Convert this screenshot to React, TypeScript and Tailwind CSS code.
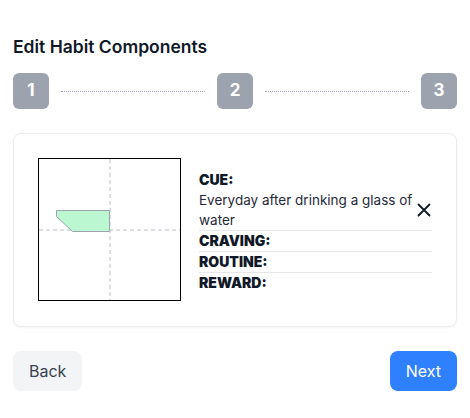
import React from "react";

function StepBox({ n }: { n: number }) {
  return (
    <div className="flex h-9 w-9 shrink-0 items-center justify-center rounded-md bg-[#9ca3af] text-[17px] font-bold text-white">
      {n}
    </div>
  );
}

function Canvas() {
  return (
    <div className="h-[143px] w-[143px] shrink-0 border border-black bg-white">
      <svg width="141" height="141" viewBox="0 0 141 141" className="block">
        <line x1="71" y1="0" x2="71" y2="141" stroke="#d1d5db" strokeWidth="1.5" strokeDasharray="4 3" />
        <line x1="0" y1="71" x2="141" y2="71" stroke="#d1d5db" strokeWidth="1.5" strokeDasharray="4 3" />
        <polygon
          points="17.5,51.5 70.5,51.5 70.5,72.5 33.5,72.5 17.5,57.5"
          fill="#bbf7d0"
          stroke="#9ca3af"
          strokeWidth="1"
        />
      </svg>
    </div>
  );
}

export default function App() {
  return (
    <div
      className="min-h-[418px] w-[470px] bg-white px-[13px] pt-[33px] text-[#111827]"
      style={{ fontFamily: "Inter, 'Noto Sans', sans-serif" }}
    >
      <h1 className="text-[17.5px] font-semibold leading-[28px] text-[#111827]">Edit Habit Components</h1>
      <div className="mt-3 flex items-center">
        <StepBox n={1} />
        <div className="mx-3 flex-1 border-t border-dotted border-[#9ca3af]" />
        <StepBox n={2} />
        <div className="mx-3 flex-1 border-t border-dotted border-[#9ca3af]" />
        <StepBox n={3} />
      </div>
      <div className="mt-6 flex items-center gap-[18px] rounded-lg border border-[#ececec] bg-white px-6 pt-6 pb-[25px] shadow-[0_1px_2px_rgba(0,0,0,0.05)]">
        <Canvas />
        <div className="min-w-0 flex-1 pt-[4px] text-sm leading-5 text-[#111827]">
          <div className="border-b border-[#e5e7eb]">
            <div className="font-black">CUE:</div>
            <div className="flex items-center justify-between">
              <div className="whitespace-nowrap text-[13.5px] text-[#1f2937]">
                Everyday after drinking a glass of
                <br />
                water
              </div>
              <svg width="14" height="14" viewBox="0 0 14 14" className="mr-[1px] shrink-0">
                <path d="M1.5 1.5 L12.5 12.5 M12.5 1.5 L1.5 12.5" stroke="#111827" strokeWidth="1.8" strokeLinecap="round" />
              </svg>
            </div>
          </div>
          <div className="border-b border-[#e5e7eb] font-black">CRAVING:</div>
          <div className="border-b border-[#e5e7eb] font-black">ROUTINE:</div>
          <div className="font-black">REWARD:</div>
        </div>
      </div>
      <div className="mt-6 flex items-center justify-between">
        <button className="h-10 rounded-lg bg-[#f3f4f6] px-4 text-base text-[#374151]">Back</button>
        <button className="h-10 rounded-lg bg-[#2f80ff] px-4 text-base text-white">Next</button>
      </div>
    </div>
  );
}
